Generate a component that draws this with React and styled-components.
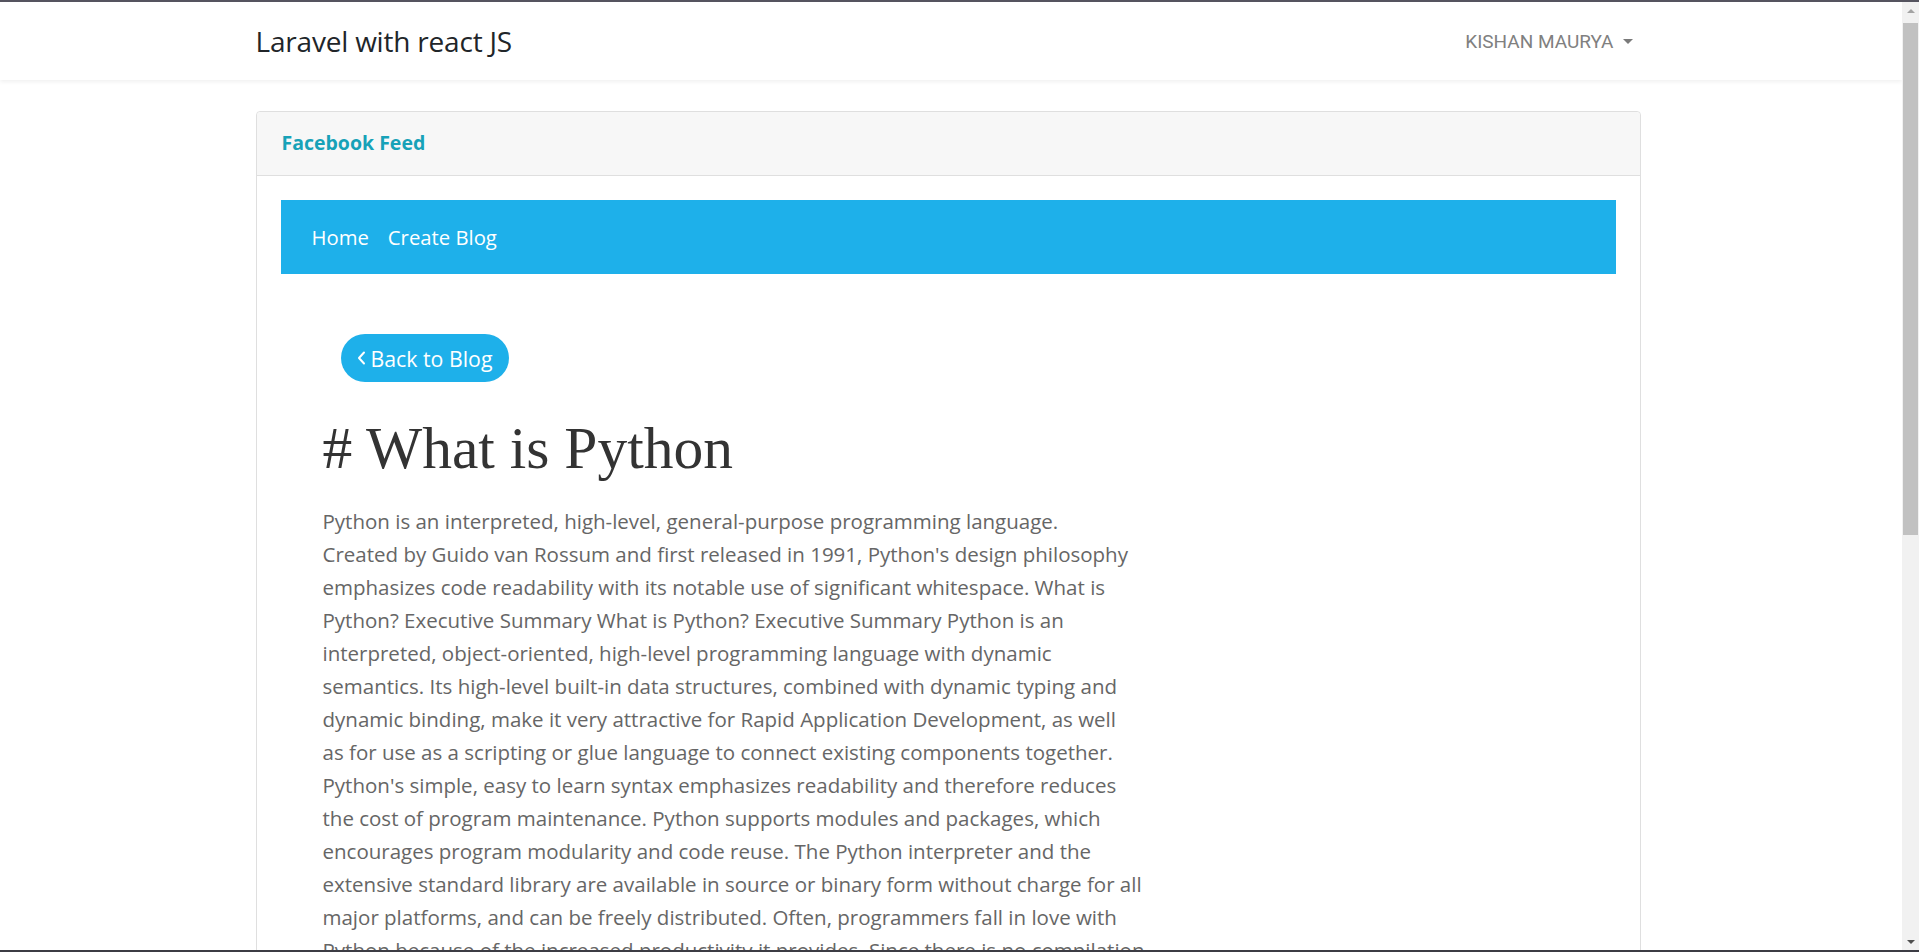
import React from "react";
import styled, { createGlobalStyle } from "styled-components";

const GlobalStyle = createGlobalStyle`
    * {
        box-sizing: border-box;
    }

    body {
        margin: 0;
        border-top: 2px solid #55545f;
        border-bottom: 2px solid #3c3c44;
        background: #fff;
        font-family: "Open Sans", sans-serif;
        color: #212529;
        overflow: hidden;
    }
`

const Layout = styled.div`
    display: flex;
    height: calc(100vh - 4px);
`

const Page = styled.div`
    flex: 1;
    min-width: 0;
    overflow: hidden;
`

const Scrollbar = styled.div`
    width: 17px;
    flex-shrink: 0;
    display: flex;
    flex-direction: column;
    align-items: center;
    background: #f1f1f1;
`

const ScrollArrow = styled.div`
    height: 17px;
    width: 100%;
    display: flex;
    align-items: center;
    justify-content: center;

    &::after {
        content: "";
        border-left: 4px solid transparent;
        border-right: 4px solid transparent;
        ${props => props.down
            ? `border-top: 4px solid #505050;`
            : `border-bottom: 4px solid #a3a3a3;`}
    }
`

const ScrollThumb = styled.div`
    width: 15px;
    height: 512px;
    margin-top: 4px;
    background: #c1c1c1;
`

const Spacer = styled.div`
    flex: 1;
`

const Navbar = styled.nav`
    height: 78px;
    background: #fff;
    box-shadow: 0 2px 4px rgba(0, 0, 0, 0.06);
`

const Container = styled.div`
    max-width: 1415px;
    height: 100%;
    margin: 0 auto;
    padding: 0 18px 0 12px;
`

const NavInner = styled(Container)`
    display: flex;
    align-items: center;
    justify-content: space-between;
`

const Brand = styled.a`
    font-size: 28px;
    color: #212529;
    text-decoration: none;
    letter-spacing: -0.2px;
`

const UserToggle = styled.a`
    display: flex;
    align-items: center;
    gap: 9px;
    padding-right: 8px;
    font-family: Roboto, sans-serif;
    font-size: 19px;
    color: #808080;
    text-decoration: none;
    cursor: pointer;

    &::after {
        content: "";
        border-top: 5px solid #7a7a7a;
        border-left: 5px solid transparent;
        border-right: 5px solid transparent;
    }
`

const Main = styled.main`
    padding-top: 31px;
`

const Card = styled.div`
    border: 1px solid #dfdfdf;
    border-radius: 4px;
    min-height: 1200px;
`

const CardHeader = styled.div`
    height: 64px;
    display: flex;
    align-items: center;
    padding: 0 25px 2px;
    background: #f7f7f7;
    border-bottom: 1px solid #dfdfdf;
    border-radius: 4px 4px 0 0;
    font-size: 19.5px;
    font-weight: 700;
    color: #17a2b8;
`

const CardBody = styled.div`
    padding: 24px;
`

const BlogNav = styled.div`
    height: 74px;
    display: flex;
    align-items: center;
    gap: 19px;
    padding: 0 31px;
    background: #1eb0ea;
`

const NavLink = styled.a`
    font-size: 20.3px;
    color: #fff;
    text-decoration: none;
`

const Article = styled.article`
    padding: 60px 0 0 42px;
`

const BackButton = styled.button`
    display: inline-flex;
    align-items: center;
    gap: 5px;
    height: 48px;
    margin-left: 18px;
    padding: 0 17px 0 16px;
    border: none;
    border-radius: 24px;
    background: #1eb0ea;
    color: #fff;
    font-family: "Open Sans", sans-serif;
    font-size: 21.3px;
    cursor: pointer;
`

const Title = styled.h1`
    margin: 32px 0 23px;
    font-family: "Liberation Serif", serif;
    font-size: 59.5px;
    font-weight: 400;
    line-height: 1.15;
    color: #333;
`

const Body = styled.p`
    margin: 0;
    font-size: 20.5px;
    line-height: 33px;
    color: #666;
    white-space: nowrap;
`

const Chevron = () => (
    <svg width="9" height="14" viewBox="0 0 9 14" fill="none">
        <polyline points="7,1.5 2,7 7,12.5" stroke="#fff" strokeWidth="2" strokeLinecap="round" strokeLinejoin="round" />
    </svg>
)

// line breaks as they fall in the original column
const lines = [
    "Python is an interpreted, high-level, general-purpose programming language.",
    "Created by Guido van Rossum and first released in 1991, Python's design philosophy",
    "emphasizes code readability with its notable use of significant whitespace. What is",
    "Python? Executive Summary What is Python? Executive Summary Python is an",
    "interpreted, object-oriented, high-level programming language with dynamic",
    "semantics. Its high-level built-in data structures, combined with dynamic typing and",
    "dynamic binding, make it very attractive for Rapid Application Development, as well",
    "as for use as a scripting or glue language to connect existing components together.",
    "Python's simple, easy to learn syntax emphasizes readability and therefore reduces",
    "the cost of program maintenance. Python supports modules and packages, which",
    "encourages program modularity and code reuse. The Python interpreter and the",
    "extensive standard library are available in source or binary form without charge for all",
    "major platforms, and can be freely distributed. Often, programmers fall in love with",
    "Python because of the increased productivity it provides. Since there is no compilation",
    "step, the edit-test-debug cycle is incredibly fast. Debugging Python programs is easy: a",
    "bug or bad input will never cause a segmentation fault.",
]

const App = () => {
    return (
        <Layout>
            <GlobalStyle />
            <Page>
                <Navbar>
                    <NavInner>
                        <Brand href="#">Laravel with react JS</Brand>
                        <UserToggle>KISHAN MAURYA</UserToggle>
                    </NavInner>
                </Navbar>
                <Main>
                    <Container>
                        <Card>
                            <CardHeader>Facebook Feed</CardHeader>
                            <CardBody>
                                <BlogNav>
                                    <NavLink href="#">Home</NavLink>
                                    <NavLink href="#">Create Blog</NavLink>
                                </BlogNav>
                                <Article>
                                    <BackButton>
                                        <Chevron />
                                        Back to Blog
                                    </BackButton>
                                    <Title># What is Python</Title>
                                    <Body>
                                        {lines.map((line, i) => (
                                            <React.Fragment key={i}>
                                                {line}
                                                {i < lines.length - 1 && <br />}
                                            </React.Fragment>
                                        ))}
                                    </Body>
                                </Article>
                            </CardBody>
                        </Card>
                    </Container>
                </Main>
            </Page>
            <Scrollbar>
                <ScrollArrow />
                <ScrollThumb />
                <Spacer />
                <ScrollArrow down />
            </Scrollbar>
        </Layout>
    )
}

export default App;
